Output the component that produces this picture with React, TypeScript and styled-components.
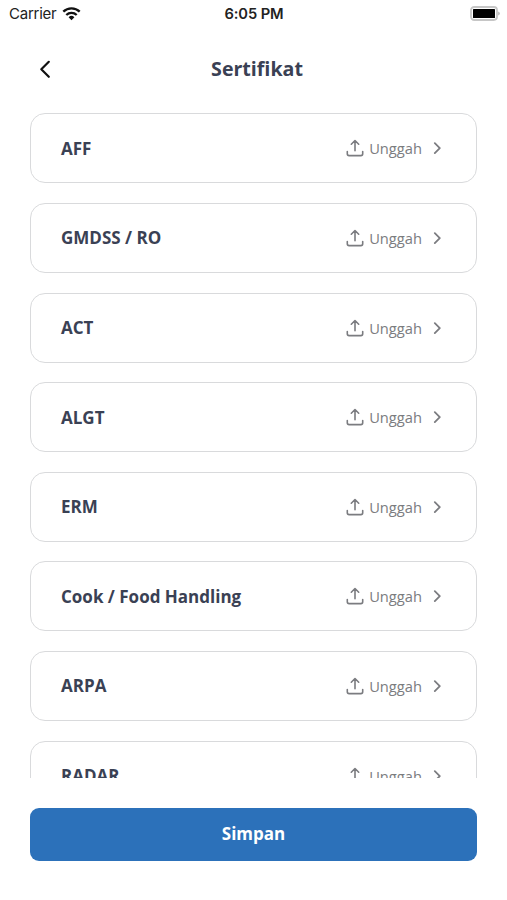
import React from "react";
import styled, { createGlobalStyle } from "styled-components";

const GlobalStyle = createGlobalStyle`
  * { box-sizing: border-box; }
  body { margin: 0; background: #fff; overflow: hidden; }
`;
const Screen = styled.main`
  width: 507px;
  height: 900px;
  display: flex;
  flex-direction: column;
  background: #fff;
  color: #3a4154;
  font-family: "Open Sans", sans-serif;
`;
const StatusBar = styled.div`
  height: 28px;
  flex: none;
  display: grid;
  grid-template-columns: 1fr auto 1fr;
  align-items: center;
  padding: 0 7px 0 9px;
  color: #222;
  font: 400 15px/28px Inter, sans-serif;
`;
const Carrier = styled.div`
  display: flex;
  align-items: center;
  gap: 6px;
  letter-spacing: -0.25px;
`;
const Clock = styled.div`
  margin-left: -1px;
  font-weight: 600;
  font-size: 14.7px;
  letter-spacing: -0.1px;
`;
const BatterySlot = styled.div`
  display: flex;
  justify-content: flex-end;
  padding-bottom: 2px;
`;
const Header = styled.header`
  height: 85px;
  flex: none;
  display: grid;
  grid-template-columns: 60px 1fr 53px;
  align-items: center;
  padding: 0 0 3px;
`;
const BackButton = styled.button`
  display: flex;
  padding: 0;
  margin-left: 36px;
  border: 0;
  background: none;
`;
const Title = styled.h1`
  margin: 0;
  text-align: center;
  font-size: 19.6px;
  line-height: 28px;
  font-weight: 700;
`;
const List = styled.div`
  height: 665px;
  flex: none;
  overflow: hidden;
  padding: 0.4px 30px 0;
  display: flex;
  flex-direction: column;
  gap: 19.6px;
`;
const Card = styled.div`
  height: 70px;
  flex: none;
  display: flex;
  align-items: center;
  justify-content: space-between;
  padding: 0 35px 0 30px;
  border: 1px solid #d9dadc;
  border-radius: 15px;
`;
const Name = styled.span`
  padding-top: 1px;
  font-size: 17px;
  line-height: 24px;
  font-weight: 700;
`;
const Upload = styled.button`
  display: flex;
  align-items: center;
  padding: 0;
  border: 0;
  background: none;
  color: #7b7c80;
  font: 400 14.7px/22px "Open Sans", sans-serif;
`;
const UploadLabel = styled.span`
  margin: 0 11px 0 5px;
`;
const Footer = styled.footer`
  padding: 29.5px 30px 0;
`;
const SaveButton = styled.button`
  width: 100%;
  height: 53px;
  border: 0;
  border-radius: 9px;
  background: #2c71ba;
  color: #fff;
  font: 700 17px/24px "Open Sans", sans-serif;
`;

const WifiIcon = () => (
  <svg width="19" height="14" viewBox="0 0 19 14" fill="none" stroke="#111" strokeWidth="2.3">
    <path d="M1.3 4.7a11.8 11.8 0 0 1 16.4 0M4.3 8a7.4 7.4 0 0 1 10.4 0" />
    <path d="M6.6 10.3a4.1 4.1 0 0 1 5.8 0L9.5 13.2Z" fill="#111" stroke="none" />
  </svg>
);
const BatteryIcon = () => (
  <svg width="30" height="15" viewBox="0 0 30 15">
    <rect x="1" y="1" width="26" height="13" rx="3.2" fill="none" stroke="#c6c6c6" strokeWidth="1.8" />
    <rect x="3" y="3" width="22" height="9" rx=".6" fill="#000" />
    <path d="M28.2 5.5q1.6.6 1.6 2t-1.6 2Z" fill="#b5b5b5" />
  </svg>
);
const BackIcon = () => (
  <svg width="18" height="20" viewBox="0 0 18 20" fill="none" stroke="#111" strokeWidth="2.2" strokeLinecap="round" strokeLinejoin="round">
    <path d="M12.8 2.8 5.3 10.3l7.5 7.5" />
  </svg>
);
const UploadIcon = () => (
  <svg width="18" height="18" viewBox="0 0 18 18" fill="none" stroke="currentColor" strokeWidth="1.6" strokeLinecap="round" strokeLinejoin="round">
    <path d="M9 11.7V1.8M5.3 5.2 9 1.5l3.7 3.7M1.3 12.5v2.3q0 1.8 1.8 1.8h11.8q1.8 0 1.8-1.8v-2.3" />
  </svg>
);
const ChevronIcon = () => (
  <svg width="8" height="14" viewBox="0 0 8 14" fill="none" stroke="currentColor" strokeWidth="1.8" strokeLinecap="round" strokeLinejoin="round">
    <path d="m1.8 2.1 5 5-5 5" />
  </svg>
);

const certificates = ["AFF", "GMDSS / RO", "ACT", "ALGT", "ERM", "Cook / Food Handling", "ARPA", "RADAR"];

export default function App() {
  return (
    <Screen>
      <GlobalStyle />
      <StatusBar>
        <Carrier>Carrier <WifiIcon /></Carrier>
        <Clock>6:05 PM</Clock>
        <BatterySlot><BatteryIcon /></BatterySlot>
      </StatusBar>
      <Header>
        <BackButton aria-label="Kembali"><BackIcon /></BackButton>
        <Title>Sertifikat</Title>
      </Header>
      <List>
        {certificates.map((name) => (
          <Card key={name}>
            <Name>{name}</Name>
            <Upload>
              <UploadIcon />
              <UploadLabel>Unggah</UploadLabel>
              <ChevronIcon />
            </Upload>
          </Card>
        ))}
      </List>
      <Footer><SaveButton>Simpan</SaveButton></Footer>
    </Screen>
  );
}
